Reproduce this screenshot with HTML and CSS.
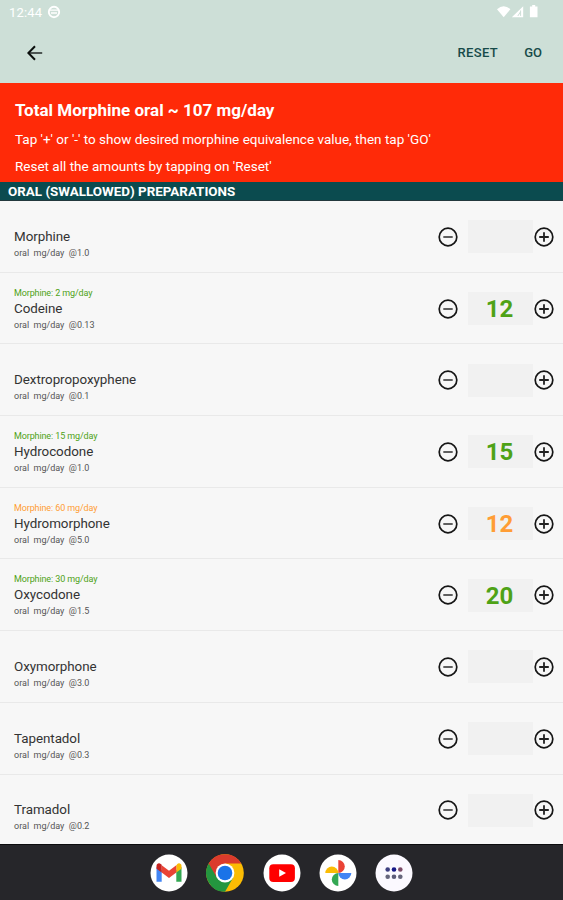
FILE: index.html
```html
<!DOCTYPE html>
<html lang="en">
<head>
    <meta charset="UTF-8">
    <meta name="viewport" content="width=device-width, initial-scale=1.0">
    <title>Total Morphine</title>
    <link rel="stylesheet" href="styles.css">
</head>
<body>
    <svg class="sprite">
        <symbol id="minus" viewBox="0 0 20 20">
            <circle cx="10" cy="10" r="8.8" fill="none" stroke="#161616" stroke-width="1.7"/>
            <path d="M5.3 10h9.4" stroke="#444" stroke-width="1.7"/>
        </symbol>
        <symbol id="plus" viewBox="0 0 20 20">
            <circle cx="10" cy="10" r="8.8" fill="none" stroke="#161616" stroke-width="1.7"/>
            <path d="M5.2 10h9.6M10 5.2v9.6" stroke="#222" stroke-width="1.8"/>
        </symbol>
    </svg>

    <div class="status">
        <span class="clock">12:44</span>
        <svg class="notice" width="14" height="14" viewBox="0 0 14 14">
            <circle cx="7" cy="7" r="5.2" fill="none" stroke="#fff" stroke-width="1.9"/>
            <path d="M3 5.2h8M4 8h6" stroke="#fff" stroke-width="1.3"/>
        </svg>
        <svg class="signals" width="42" height="14" viewBox="0 0 42 14">
            <path d="M0 4.2Q6.7-1.8 13.4 4.2L6.7 12.3z" fill="#fff"/>
            <path d="M14.8 12.2L26.2 1.2v11z" fill="#fff"/>
            <path d="M23.6 5.5v5.4M20.8 11l2.6-4" stroke="#cddfd7" stroke-width="1"/>
            <path d="M35.2 0h3v1.4h2.3v10.9h-7.6V1.4h2.3z" fill="#fff"/>
        </svg>
    </div>

    <div class="toolbar">
        <svg class="back" width="16" height="16" viewBox="0 0 16 16" fill="none">
            <path d="M2.2 8h13" stroke="#3f4744" stroke-width="1.8"/>
            <path d="M8 1.3L1.4 8L8 14.7" stroke="#0b0f0d" stroke-width="2"/>
        </svg>
        <span class="action reset">RESET</span>
        <span class="action go">GO</span>
    </div>

    <div class="summary">
        <h1>Total Morphine oral ~ 107 mg/day</h1>
        <p class="tip">Tap '+' or '-' to show desired morphine equivalence value, then tap 'GO'</p>
        <p class="tip">Reset all the amounts by tapping on 'Reset'</p>
    </div>

    <div class="section">ORAL (SWALLOWED) PREPARATIONS</div>

    <div class="list">
        <div class="row">
            <div class="drug">
                <div class="equiv"></div>
                <div class="name">Morphine</div>
                <div class="unit">oral&nbsp; mg/day&nbsp; @1.0</div>
            </div>
            <svg class="btn"><use href="#minus"/></svg>
            <div class="amount"></div>
            <svg class="btn"><use href="#plus"/></svg>
        </div>
        <div class="row">
            <div class="drug">
                <div class="equiv green">Morphine: 2 mg/day</div>
                <div class="name">Codeine</div>
                <div class="unit">oral&nbsp; mg/day&nbsp; @0.13</div>
            </div>
            <svg class="btn"><use href="#minus"/></svg>
            <div class="amount green">12</div>
            <svg class="btn"><use href="#plus"/></svg>
        </div>
        <div class="row">
            <div class="drug">
                <div class="equiv"></div>
                <div class="name">Dextropropoxyphene</div>
                <div class="unit">oral&nbsp; mg/day&nbsp; @0.1</div>
            </div>
            <svg class="btn"><use href="#minus"/></svg>
            <div class="amount"></div>
            <svg class="btn"><use href="#plus"/></svg>
        </div>
        <div class="row">
            <div class="drug">
                <div class="equiv green">Morphine: 15 mg/day</div>
                <div class="name">Hydrocodone</div>
                <div class="unit">oral&nbsp; mg/day&nbsp; @1.0</div>
            </div>
            <svg class="btn"><use href="#minus"/></svg>
            <div class="amount green">15</div>
            <svg class="btn"><use href="#plus"/></svg>
        </div>
        <div class="row">
            <div class="drug">
                <div class="equiv orange">Morphine: 60 mg/day</div>
                <div class="name">Hydromorphone</div>
                <div class="unit">oral&nbsp; mg/day&nbsp; @5.0</div>
            </div>
            <svg class="btn"><use href="#minus"/></svg>
            <div class="amount orange">12</div>
            <svg class="btn"><use href="#plus"/></svg>
        </div>
        <div class="row">
            <div class="drug">
                <div class="equiv green">Morphine: 30 mg/day</div>
                <div class="name">Oxycodone</div>
                <div class="unit">oral&nbsp; mg/day&nbsp; @1.5</div>
            </div>
            <svg class="btn"><use href="#minus"/></svg>
            <div class="amount green">20</div>
            <svg class="btn"><use href="#plus"/></svg>
        </div>
        <div class="row">
            <div class="drug">
                <div class="equiv"></div>
                <div class="name">Oxymorphone</div>
                <div class="unit">oral&nbsp; mg/day&nbsp; @3.0</div>
            </div>
            <svg class="btn"><use href="#minus"/></svg>
            <div class="amount"></div>
            <svg class="btn"><use href="#plus"/></svg>
        </div>
        <div class="row">
            <div class="drug">
                <div class="equiv"></div>
                <div class="name">Tapentadol</div>
                <div class="unit">oral&nbsp; mg/day&nbsp; @0.3</div>
            </div>
            <svg class="btn"><use href="#minus"/></svg>
            <div class="amount"></div>
            <svg class="btn"><use href="#plus"/></svg>
        </div>
        <div class="row">
            <div class="drug">
                <div class="equiv"></div>
                <div class="name">Tramadol</div>
                <div class="unit">oral&nbsp; mg/day&nbsp; @0.2</div>
            </div>
            <svg class="btn"><use href="#minus"/></svg>
            <div class="amount"></div>
            <svg class="btn"><use href="#plus"/></svg>
        </div>
    </div>

    <div class="dock">
        <!-- Gmail -->
        <svg class="app" viewBox="0 0 38 38">
            <circle cx="19" cy="19" r="18.5" fill="#fff"/>
            <path d="M6.500 13v14.800h5.200V16z" fill="#4285f4"/>
            <path d="M26.300 16v11.800h5.200V13z" fill="#34a853"/>
            <path d="M26.300 11.500v7l5.200-3.700v-2.900c0-2.300-2.500-3.300-4.200-2z" fill="#fbbc04"/>
            <path d="M11.700 18.500v-7.200l7.300 5.500 7.300-5.500v7.200L19 24z" fill="#ea4335"/>
            <path d="M6.500 14.800v-2.900c0-2.300 2.500-3.300 4.200-2l1 .8v7.800z" fill="#c5221f"/>
        </svg>
        <!-- Chrome -->
        <svg class="app" viewBox="0 0 38 38">
            <circle cx="19" cy="19" r="18.8" fill="#fbbc04"/>
            <path d="M19 19L2.7 9.6A18.8 18.8 0 0 0 19 37.8L27.1 23.7z" fill="#23963f"/>
            <path d="M2.7 9.6A18.8 18.8 0 0 1 35.3 9.6H19L10.9 23.7z" fill="#db3b2c"/>
            <circle cx="19" cy="19" r="9.4" fill="#fff"/>
            <circle cx="19" cy="19" r="7.3" fill="#1a73e8"/>
        </svg>
        <!-- YouTube -->
        <svg class="app" viewBox="0 0 38 38">
            <circle cx="19" cy="19" r="18.5" fill="#fff"/>
            <rect x="6.3" y="10.2" width="25.6" height="17.8" rx="4" fill="#f00"/>
            <path d="M16.2 15.2v7.6l6.8-3.8z" fill="#fff"/>
        </svg>
        <!-- Photos -->
        <svg class="app" viewBox="0 0 38 38">
            <circle cx="19" cy="19" r="18.5" fill="#fff"/>
            <path d="M19.3 19V6a6.5 6.5 0 0 1 0 13z" fill="#ea4335"/>
            <path d="M19.3 19h13a6.5 6.5 0 0 1-13 0z" fill="#4285f4"/>
            <path d="M19.3 19v13a6.5 6.5 0 0 1 0-13z" fill="#34a853"/>
            <path d="M19.3 19h-13a6.5 6.5 0 0 1 13 0z" fill="#fbbc04"/>
        </svg>
        <!-- All apps -->
        <svg class="app" viewBox="0 0 38 38">
            <circle cx="19" cy="19" r="18.5" fill="#fbf9ff"/>
            <circle cx="12.7" cy="15.5" r="2.3" fill="#3d3f80"/>
            <circle cx="19" cy="15.5" r="2.3" fill="#171a87"/>
            <circle cx="25.3" cy="15.500" r="2.3" fill="#7c4c68"/>
            <circle cx="12.7" cy="22.7" r="2.3" fill="#66667c"/>
            <circle cx="19" cy="22.7" r="2.3" fill="#5c5c78"/>
            <circle cx="25.3" cy="22.7" r="2.3" fill="#66667c"/>
        </svg>
    </div>
</body>
</html>
```
FILE: styles.css
```css
* {
    box-sizing: border-box;
}
body {
    margin: 0;
    height: 900px;
    display: flex;
    flex-direction: column;
    overflow: hidden;
    background-color: #f7f7f7;
    font-family: Roboto, sans-serif;
}
.sprite {
    display: none;
}
.status {
    flex: none;
    height: 24px;
    padding: 0 24px 0 9px;
    display: flex;
    align-items: center;
    background-color: #cddfd7;
    color: white;
}
.clock {
    font-size: 13px;
    letter-spacing: 0.2px;
}
.notice {
    margin-left: 5px;
}
.signals {
    margin-left: auto;
}
.toolbar {
    flex: none;
    height: 59px;
    padding: 0 21px 2px 27px;
    display: flex;
    align-items: center;
    background-color: #cddfd7;
}
.action {
    color: #174b49;
    font-size: 13px;
    font-weight: 500;
    letter-spacing: 0.4px;
}
.reset {
    margin-left: auto;
    margin-right: 26px;
}
.go {
    letter-spacing: 0;
}
.summary {
    flex: none;
    height: 99px;
    padding: 16px 15px 0;
    background-color: #ff2a08;
    color: white;
}
.summary h1 {
    margin: 0 0 10px;
    font-size: 17px;
    line-height: 22px;
    font-weight: 700;
}
.tip {
    margin: 0 0 11px;
    font-size: 13.5px;
    line-height: 16px;
}
.section {
    flex: none;
    height: 19px;
    padding-left: 8px;
    background-color: #0b4b4f;
    border-bottom: 1px solid #23383d;
    color: white;
    font-size: 13.4px;
    line-height: 20px;
    font-weight: 700;
}
.list {
    flex: 1;
    overflow: hidden;
}
.row {
    height: 71.7px;
    padding: 1px 9px 0 14px;
    display: flex;
    align-items: center;
    border-bottom: 1.5px solid #e9e9e9;
}
.drug {
    flex: 1;
    color: #333;
}
.equiv {
    height: 12px;
    font-size: 9px;
    line-height: 12px;
    letter-spacing: -0.12px;
}
.name {
    font-size: 13.4px;
    line-height: 20px;
    letter-spacing: -0.05px;
}
.unit {
    font-size: 9px;
    line-height: 12px;
    color: #555;
}
.btn {
    width: 20px;
    height: 20px;
}
.amount {
    width: 65px;
    height: 33px;
    margin: 0 1px 0 10px;
    padding-right: 2px;
    background-color: #f1f1f1;
    font-size: 24px;
    line-height: 34px;
    font-weight: 700;
    text-align: center;
}
.green {
    color: #4ea216;
}
.orange {
    color: #ff9d35;
}
.dock {
    flex: none;
    height: 56px;
    display: flex;
    justify-content: center;
    align-items: center;
    gap: 18.2px;
    background-color: #26262a;
    border-top: 1px solid #0c0c0e;
}
.app {
    width: 38px;
    height: 38px;
}
```
